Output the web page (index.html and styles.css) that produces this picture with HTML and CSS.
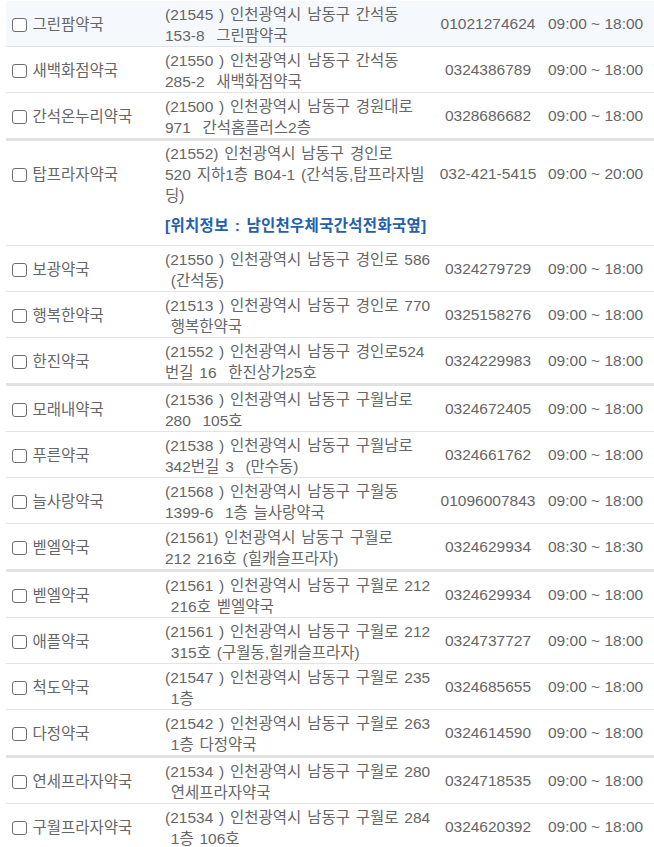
FILE: index.html
```html
<!DOCTYPE html>
<html lang="ko">
<head>
    <meta charset="UTF-8">
    <meta name="viewport" content="width=device-width, initial-scale=1.0">
    <title>약국 목록</title>
    <link rel="stylesheet" href="styles.css">
</head>
<body>

<div class="list-wrap">
    <table class="pharm-table">
        <colgroup>
            <col class="col-name">
            <col class="col-addr">
            <col class="col-tel">
            <col class="col-time">
        </colgroup>
        <tbody>
            <tr class="on">
                <td class="name"><span class="chk"></span>그린팜약국</td>
                <td class="addr">(21545 ) 인천광역시 남동구 간석동<br>153-8 &nbsp;그린팜약국</td>
                <td class="tel">01021274624</td>
                <td class="time">09:00 ~ 18:00</td>
            </tr>
            <tr>
                <td class="name"><span class="chk"></span>새백화점약국</td>
                <td class="addr">(21550 ) 인천광역시 남동구 간석동<br>285-2 &nbsp;새백화점약국</td>
                <td class="tel">0324386789</td>
                <td class="time">09:00 ~ 18:00</td>
            </tr>
            <tr class="sep">
                <td class="name"><span class="chk"></span>간석온누리약국</td>
                <td class="addr">(21500 ) 인천광역시 남동구 경원대로<br>971 &nbsp;간석홈플러스2층</td>
                <td class="tel">0328686682</td>
                <td class="time">09:00 ~ 18:00</td>
            </tr>
            <tr class="has-loc">
                <td class="name"><span class="chk"></span>탑프라자약국</td>
                <td class="addr">(21552) 인천광역시 남동구 경인로<br>520 지하1층 B04-1 (간석동,탑프라자빌<br>딩)</td>
                <td class="tel">032-421-5415</td>
                <td class="time">09:00 ~ 20:00</td>
            </tr>
            <tr class="loc">
                <td></td>
                <td class="loc-info">[위치정보 : 남인천우체국간석전화국옆]</td>
                <td></td>
                <td></td>
            </tr>
            <tr>
                <td class="name"><span class="chk"></span>보광약국</td>
                <td class="addr">(21550 ) 인천광역시 남동구 경인로 586<br>&nbsp;(간석동)</td>
                <td class="tel">0324279729</td>
                <td class="time">09:00 ~ 18:00</td>
            </tr>
            <tr>
                <td class="name"><span class="chk"></span>행복한약국</td>
                <td class="addr">(21513 ) 인천광역시 남동구 경인로 770<br>&nbsp;행복한약국</td>
                <td class="tel">0325158276</td>
                <td class="time">09:00 ~ 18:00</td>
            </tr>
            <tr class="sep">
                <td class="name"><span class="chk"></span>한진약국</td>
                <td class="addr">(21552 ) 인천광역시 남동구 경인로524<br>번길 16 &nbsp;한진상가25호</td>
                <td class="tel">0324229983</td>
                <td class="time">09:00 ~ 18:00</td>
            </tr>
            <tr>
                <td class="name"><span class="chk"></span>모래내약국</td>
                <td class="addr">(21536 ) 인천광역시 남동구 구월남로<br>280 &nbsp;105호</td>
                <td class="tel">0324672405</td>
                <td class="time">09:00 ~ 18:00</td>
            </tr>
            <tr>
                <td class="name"><span class="chk"></span>푸른약국</td>
                <td class="addr">(21538 ) 인천광역시 남동구 구월남로<br>342번길 3 &nbsp;(만수동)</td>
                <td class="tel">0324661762</td>
                <td class="time">09:00 ~ 18:00</td>
            </tr>
            <tr>
                <td class="name"><span class="chk"></span>늘사랑약국</td>
                <td class="addr">(21568 ) 인천광역시 남동구 구월동<br>1399-6 &nbsp;1층 늘사랑약국</td>
                <td class="tel">01096007843</td>
                <td class="time">09:00 ~ 18:00</td>
            </tr>
            <tr class="sep">
                <td class="name"><span class="chk"></span>벧엘약국</td>
                <td class="addr">(21561) 인천광역시 남동구 구월로<br>212 216호 (힐캐슬프라자)</td>
                <td class="tel">0324629934</td>
                <td class="time">08:30 ~ 18:30</td>
            </tr>
            <tr>
                <td class="name"><span class="chk"></span>벧엘약국</td>
                <td class="addr">(21561 ) 인천광역시 남동구 구월로 212<br>&nbsp;216호 벧엘약국</td>
                <td class="tel">0324629934</td>
                <td class="time">09:00 ~ 18:00</td>
            </tr>
            <tr>
                <td class="name"><span class="chk"></span>애플약국</td>
                <td class="addr">(21561 ) 인천광역시 남동구 구월로 212<br>&nbsp;315호 (구월동,힐캐슬프라자)</td>
                <td class="tel">0324737727</td>
                <td class="time">09:00 ~ 18:00</td>
            </tr>
            <tr>
                <td class="name"><span class="chk"></span>척도약국</td>
                <td class="addr">(21547 ) 인천광역시 남동구 구월로 235<br>&nbsp;1층</td>
                <td class="tel">0324685655</td>
                <td class="time">09:00 ~ 18:00</td>
            </tr>
            <tr class="sep">
                <td class="name"><span class="chk"></span>다정약국</td>
                <td class="addr">(21542 ) 인천광역시 남동구 구월로 263<br>&nbsp;1층 다정약국</td>
                <td class="tel">0324614590</td>
                <td class="time">09:00 ~ 18:00</td>
            </tr>
            <tr>
                <td class="name"><span class="chk"></span>연세프라자약국</td>
                <td class="addr">(21534 ) 인천광역시 남동구 구월로 280<br>&nbsp;연세프라자약국</td>
                <td class="tel">0324718535</td>
                <td class="time">09:00 ~ 18:00</td>
            </tr>
            <tr>
                <td class="name"><span class="chk"></span>구월프라자약국</td>
                <td class="addr">(21534 ) 인천광역시 남동구 구월로 284<br>&nbsp;1층 106호</td>
                <td class="tel">0324620392</td>
                <td class="time">09:00 ~ 18:00</td>
            </tr>
        </tbody>
    </table>
</div>

</body>
</html>
```

FILE: styles.css
```css
body {
    font-family: "Liberation Sans", "Noto Sans CJK KR", sans-serif;
    background-color: #fff;
    margin: 0;
    padding: 0;
    overflow: hidden;
}
.list-wrap {
    padding: 1px 0 0 6px;
}
.pharm-table {
    width: 648px;
    table-layout: fixed;
    border-collapse: collapse;
    font-size: 15.5px;
    line-height: 21px;
    word-spacing: 1.5px;
    color: #666;
}
.col-name { width: 154px; }
.col-addr { width: 275px; }
.col-tel { width: 106px; }
.col-time { width: 113px; }

.pharm-table td {
    padding: 2px 5px 0;
    height: 43px;
    vertical-align: middle;
    border-bottom: 1px solid #e4e4e4;
    white-space: nowrap;
}
.pharm-table tr.on td {
    background-color: #f5f8fd;
}
.pharm-table tr.sep td {
    border-bottom: 3px solid #e2e2e2;
}
.pharm-table tr.has-loc td {
    border-bottom: none;
}
.pharm-table .name {
    padding-top: 2px;
}
.chk {
    display: inline-block;
    width: 12.5px;
    height: 12px;
    border: 1.5px solid #6e6e6e;
    border-radius: 3px;
    background: #fff;
    margin: 0 6px 0 1px;
    vertical-align: -2px;
}
.pharm-table .tel {
    text-align: center;
    padding: 0;
    word-spacing: 0;
}
.pharm-table .time {
    padding: 0 0 0 7px;
    word-spacing: 0;
}
.pharm-table td.loc-info {
    height: 21px;
    padding: 9px 5px 9px;
    color: #2360ad;
    font-weight: bold;
    letter-spacing: 0.3px;
}
.pharm-table tr.loc td {
    height: 21px;
    padding-top: 9px;
    padding-bottom: 9px;
}
```
